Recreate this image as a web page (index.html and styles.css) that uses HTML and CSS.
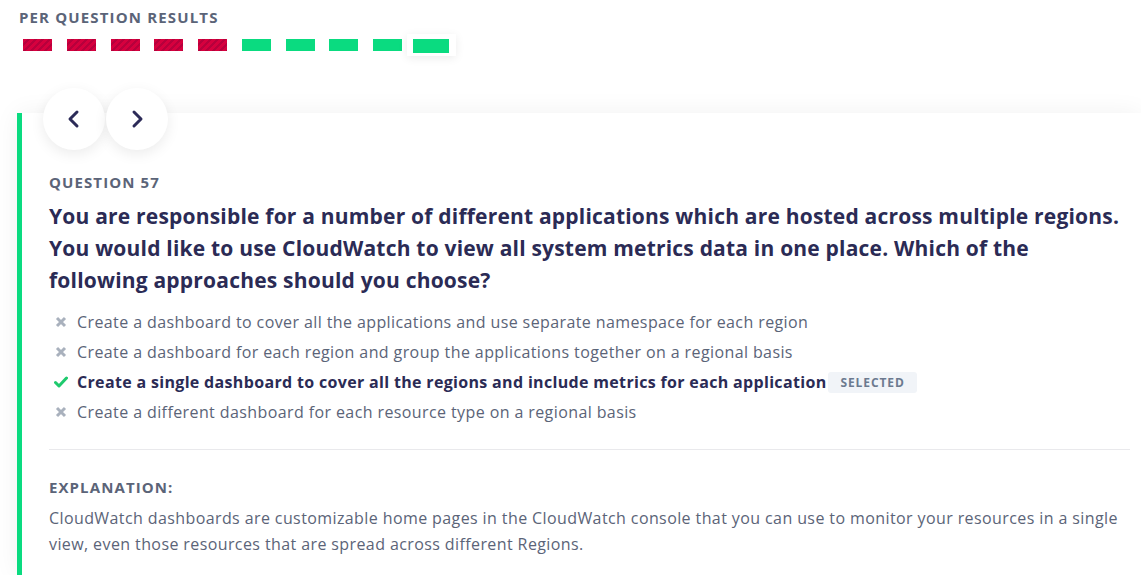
FILE: index.html
```html
<!DOCTYPE html>
<html>
<head>
<meta charset="utf-8">
<link rel="stylesheet" href="styles.css">
</head>
<body>
<section class="results">
  <h3 class="results-title">PER QUESTION RESULTS</h3>
  <div class="bars">
    <span class="bar wrong"></span>
    <span class="bar wrong"></span>
    <span class="bar wrong"></span>
    <span class="bar wrong"></span>
    <span class="bar wrong"></span>
    <span class="bar right"></span>
    <span class="bar right"></span>
    <span class="bar right"></span>
    <span class="bar right"></span>
    <span class="bar-active"><span class="bar right big"></span></span>
  </div>
</section>

<section class="card">
  <div class="nav">
    <button class="nav-btn" aria-label="Previous">
      <svg width="24" height="24" viewBox="0 0 24 24"><polyline points="15,5 8,12 15,19" fill="none" stroke="#2c2b58" stroke-width="3" stroke-linecap="round" stroke-linejoin="round"/></svg>
    </button>
    <button class="nav-btn" aria-label="Next">
      <svg width="24" height="24" viewBox="0 0 24 24"><polyline points="9,5 16,12 9,19" fill="none" stroke="#2c2b58" stroke-width="3" stroke-linecap="round" stroke-linejoin="round"/></svg>
    </button>
  </div>
  <div class="label">QUESTION 57</div>
  <h2 class="question">You are responsible for a number of different applications which are hosted across multiple regions. You would like to use CloudWatch to view all system metrics data in one place. Which of the following approaches should you choose?</h2>
  <ul class="options">
    <li class="option"><span class="icon"><svg width="12" height="12" viewBox="0 0 12 12"><path d="M2 2 L10 10 M10 2 L2 10" stroke="#a9b1bd" stroke-width="3" stroke-linecap="butt"/></svg></span>Create a dashboard to cover all the applications and use separate namespace for each region</li>
    <li class="option"><span class="icon"><svg width="12" height="12" viewBox="0 0 12 12"><path d="M2 2 L10 10 M10 2 L2 10" stroke="#a9b1bd" stroke-width="3" stroke-linecap="butt"/></svg></span>Create a dashboard for each region and group the applications together on a regional basis</li>
    <li class="option selected"><span class="icon"><svg width="14" height="12" viewBox="0 0 14 12"><path d="M1.5 6.5 L5 10 L12.5 2" fill="none" stroke="#1fca6e" stroke-width="3" stroke-linecap="round" stroke-linejoin="round"/></svg></span>Create a single dashboard to cover all the regions and include metrics for each application<span class="badge">SELECTED</span></li>
    <li class="option"><span class="icon"><svg width="12" height="12" viewBox="0 0 12 12"><path d="M2 2 L10 10 M10 2 L2 10" stroke="#a9b1bd" stroke-width="3" stroke-linecap="butt"/></svg></span>Create a different dashboard for each resource type on a regional basis</li>
  </ul>
  <hr class="divider">
  <div class="label expl-label">EXPLANATION:</div>
  <p class="explanation">CloudWatch dashboards are customizable home pages in the CloudWatch console that you can use to monitor your resources in a single view, even those resources that are spread across different Regions.</p>
</section>
</body>
</html>
```

FILE: styles.css
```css
* { box-sizing: border-box; }
html, body { margin: 0; padding: 0; background: #ffffff; }
body {
  font-family: "Open Sans", sans-serif;
  color: #5b6478;
  width: 1141px;
  overflow: hidden;
}

.results { padding: 7px 0 0 19px; }
.results-title {
  margin: 0;
  font-size: 15px;
  line-height: 20px;
  font-weight: 700;
  letter-spacing: 1.15px;
  color: #5b6478;
}
.bars {
  display: flex;
  align-items: center;
  gap: 14.75px;
  margin: 5px 0 0 4px;
  height: 26px;
}
.bar {
  display: block;
  width: 29px;
  height: 12px;
}
.bar.wrong {
  background: repeating-linear-gradient(135deg, #d6003e 0 3px, #b7003c 3px 5px);
}
.bar.right { background: #0adb80; }
.bar.big { width: 36px; height: 14px; }
.bar-active {
  display: block;
  margin-left: -10px;
  padding: 5px 7px 3px 6px;
  background: #fff;
  box-shadow: 0 2px 10px rgba(0,0,0,0.08);
}

.card {
  position: relative;
  margin: 55px 0 0 17px;
  background: #fff;
  border-left: 5px solid #0adb80;
  box-shadow: 0 0 24px rgba(0,0,0,0.06);
  padding: 59px 11px 18px 27px;
}
.nav {
  position: absolute;
  top: -25px;
  left: 21px;
  display: flex;
  gap: 1px;
}
.nav-btn {
  width: 62px;
  height: 62px;
  border-radius: 50%;
  border: none;
  background: #fff;
  box-shadow: 0 4px 14px rgba(0,0,0,0.08);
  display: flex;
  align-items: center;
  justify-content: center;
  padding: 0;
}

.label {
  font-size: 15px;
  line-height: 20px;
  font-weight: 700;
  letter-spacing: 1.1px;
  color: #5b6478;
}
.question {
  margin: 8px 0 0;
  font-size: 21px;
  line-height: 32px;
  font-weight: 700;
  letter-spacing: 0.2px;
  color: #2b2b55;
}
.options {
  list-style: none;
  margin: 11px 0 0;
  padding: 0;
}
.option {
  display: flex;
  align-items: center;
  height: 30px;
  font-size: 16px;
  letter-spacing: 0.4px;
  color: #5b6478;
}
.option .icon {
  width: 28px;
  display: flex;
  align-items: center;
  padding-left: 6px;
}
.option.selected {
  font-weight: 700;
  letter-spacing: 0.33px;
  color: #2b2b55;
}
.option.selected .icon { padding-left: 5px; }
.badge {
  margin-left: 2px;
  background: #f1f4f8;
  color: #6c7a8f;
  font-size: 12px;
  font-weight: 700;
  letter-spacing: 0.9px;
  padding: 0 12px;
  height: 21px;
  line-height: 21px;
  border-radius: 3px;
}
.divider {
  border: none;
  border-top: 1px solid #e9e9ec;
  margin: 22px 0 0;
}
.expl-label { margin-top: 27px; }
.explanation {
  margin: 8px 0 0;
  font-size: 16px;
  line-height: 26px;
  letter-spacing: 0.4px;
  color: #5b6478;
}
```
